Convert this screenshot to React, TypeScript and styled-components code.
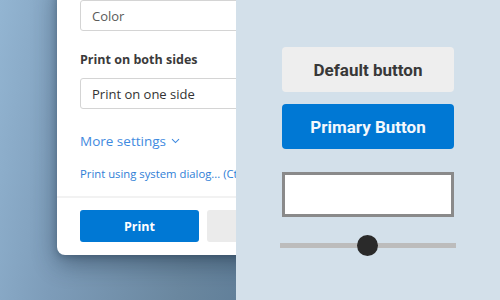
import React from 'react'
import styled, { createGlobalStyle } from 'styled-components'

const GlobalStyle = createGlobalStyle`
  html, body {
    margin: 0;
    padding: 0;
    width: 500px;
    height: 300px;
    overflow: hidden;
  }
`

const Stage = styled.div`
  display: flex;
  width: 500px;
  height: 300px;
  overflow: hidden;
`

const Desktop = styled.div`
  flex: 0 0 236px;
  height: 300px;
  overflow: hidden;
  background: linear-gradient(100deg, #93b5d2 0%, #7d9cb9 35%, #6a879f 80%, #62809a 100%);
`

const Dialog = styled.div`
  width: 320px;
  margin: -20px 0 0 57px;
  padding: 20px 0 13px 0;
  background: #ffffff;
  border-radius: 8px;
  box-shadow: 0 8px 24px rgba(20, 40, 60, 0.45), 0 2px 6px rgba(20, 40, 60, 0.25);
  font-family: 'Open Sans', 'Noto Sans', sans-serif;
`

const Section = styled.div`
  padding: 0 0 0 23px;
  display: flex;
  flex-direction: column;
`

const Select = styled.div<{ muted?: boolean }>`
  box-sizing: border-box;
  height: 31px;
  border: 1px solid #d4d4d4;
  border-radius: 3px;
  padding-left: 11px;
  display: flex;
  align-items: center;
  font-size: 13px;
  color: ${({ muted }) => (muted ? '#5a5a5a' : '#333333')};
`

const Label = styled.div`
  margin: 19px 0 8px;
  font-size: 12.5px;
  font-weight: 700;
  color: #3a3a3a;
  line-height: 20px;
`

const MoreLink = styled.div`
  margin-top: 22px;
  font-size: 13.5px;
  color: #3f8ae0;
  line-height: 20px;
  display: flex;
  align-items: center;
  gap: 5px;
`

const SystemLink = styled.div`
  margin-top: 16px;
  font-size: 11.3px;
  color: #2f7ed6;
  line-height: 14px;
  white-space: nowrap;
`

const Divider = styled.div`
  margin-top: 15px;
  height: 2px;
  background: #f2f2f2;
`

const Footer = styled.div`
  padding: 12px 0 0 23px;
  display: flex;
  gap: 8px;
`

const DialogButton = styled.div<{ primary?: boolean }>`
  box-sizing: border-box;
  width: 119px;
  height: 32px;
  border-radius: 3px;
  display: flex;
  align-items: center;
  justify-content: center;
  font-size: 12.5px;
  font-weight: 700;
  background: ${({ primary }) => (primary ? '#0078d4' : '#ebebeb')};
  color: ${({ primary }) => (primary ? '#ffffff' : '#333333')};
`

const Panel = styled.div`
  flex: 1;
  background: #d3e0ea;
  display: flex;
  flex-direction: column;
  align-items: center;
  padding-top: 47px;
  font-family: Roboto, 'Noto Sans', sans-serif;
`

const Button = styled.div<{ primary?: boolean }>`
  width: 172px;
  height: 45px;
  border-radius: 4px;
  display: flex;
  align-items: center;
  justify-content: center;
  font-size: 17px;
  font-weight: 700;
  margin-bottom: 12px;
  background: ${({ primary }) => (primary ? '#0078d4' : '#eeeeee')};
  color: ${({ primary }) => (primary ? '#f4f8fc' : '#383838')};
`

const TextBox = styled.div`
  box-sizing: border-box;
  width: 172px;
  height: 45px;
  margin-top: 11px;
  background: #ffffff;
  border: 3px solid #8a8a8a;
`

const Slider = styled.div`
  position: relative;
  width: 176px;
  height: 5px;
  margin-top: 26px;
  background: #bcbcbc;
`

const Thumb = styled.div`
  position: absolute;
  top: -8px;
  width: 21px;
  height: 21px;
  margin-left: -11.5px;
  border-radius: 50%;
  background: #2a2a2a;
`

const Chevron = () => (
  <svg width="9" height="6" viewBox="0 0 9 6" fill="none">
    <path d="M1 1.2 L4.5 4.6 L8 1.2" stroke="#3f8ae0" strokeWidth="1.1" />
  </svg>
)

const value = 0.5

export default function App() {
  return (
    <>
      <GlobalStyle />
      <Stage>
        <Desktop>
          <Dialog>
            <Section>
              <Select muted>Color</Select>
              <Label>Print on both sides</Label>
              <Select>Print on one side</Select>
              <MoreLink>
                More settings <Chevron />
              </MoreLink>
              <SystemLink>Print using system dialog... (Ctrl+Shift+P)</SystemLink>
            </Section>
            <Divider />
            <Footer>
              <DialogButton primary>Print</DialogButton>
              <DialogButton>Cancel</DialogButton>
            </Footer>
          </Dialog>
        </Desktop>
        <Panel>
          <Button>Default button</Button>
          <Button primary>Primary Button</Button>
          <TextBox />
          <Slider>
            <Thumb style={{ left: `${value * 100}%` }} />
          </Slider>
        </Panel>
      </Stage>
    </>
  )
}
